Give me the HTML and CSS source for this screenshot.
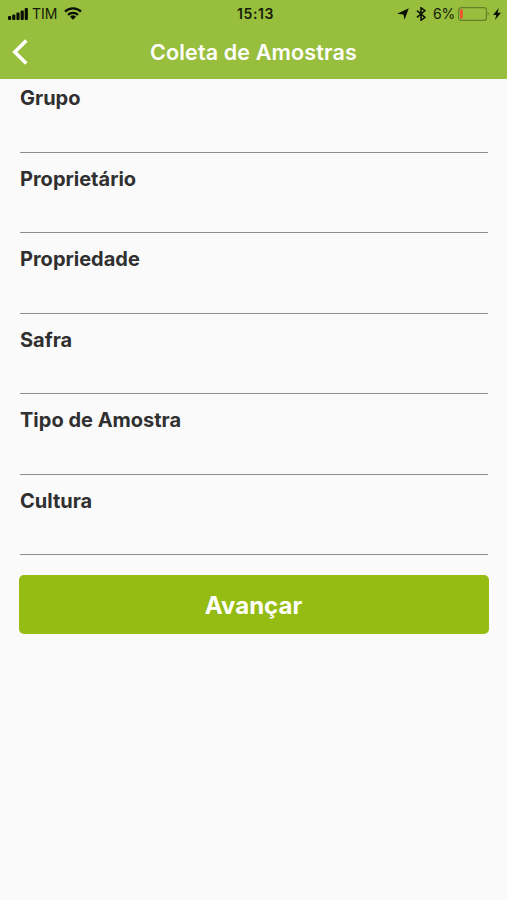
FILE: index.html
```html
<!DOCTYPE html>
<html lang="pt-BR">
<head>
<meta charset="utf-8">
<meta name="viewport" content="width=device-width">
<title>Coleta de Amostras</title>
<link rel="stylesheet" href="styles.css">
</head>
<body>
<header class="header">
  <div class="status">
    <div class="status-left">
      <svg class="signal" width="20" height="12" viewBox="0 0 20 12"><rect x="0" y="8" width="3.200" height="4" rx="1"/><rect x="4.200" y="6.500" width="3.200" height="5.500" rx="1"/><rect x="8.400" y="4.500" width="3.200" height="7.500" rx="1"/><rect x="12.600" y="2.500" width="3.200" height="9.500" rx="1"/><rect x="16.700" y="0" width="3.200" height="12" rx="1"/></svg>
      <span class="carrier">TIM</span>
      <svg class="wifi" width="18" height="13" viewBox="0 0 18 13"><g fill="none" stroke="#0b0f03" stroke-width="2.300"><path d="M1 4.600a11.500 11.500 0 0 1 16 0"/><path d="M4 7.800a7.200 7.200 0 0 1 10 0"/></g><path d="M9 12.800 6 9.800a4.300 4.300 0 0 1 6 0z"/></svg>
    </div>
    <span class="clock">15:13</span>
    <div class="status-right">
      <svg class="location" width="12" height="12" viewBox="0 0 12 12"><path d="M11.800.2 7.500 11.800 6.500 6.600.2 5.800z"/></svg>
      <svg class="bluetooth" width="10" height="14" viewBox="0 0 10 14"><path d="M1 3.700l8 6.600-4 3V.7l4 3-8 6.600" fill="none" stroke="#0b0f03" stroke-width="1.500"/></svg>
      <span class="percent">6%</span>
      <svg class="battery" width="32" height="14" viewBox="0 0 32 14"><rect x=".6" y=".6" width="27.800" height="12.800" rx="2.500" fill="none" stroke="#64802a" stroke-width="1.200"/><rect x="2" y="2.200" width="2.800" height="9.600" rx=".8" fill="#f05330"/><path d="M29.700 4.800q2.200 2.200 0 4.400z" fill="#64802a"/></svg>
      <svg class="bolt" width="8" height="12" viewBox="0 0 8 12"><path d="M5.800 0 0 7h3.300L2 12l6-7.200H4.600z"/></svg>
    </div>
  </div>
  <div class="nav">
    <svg class="back" width="17" height="28" viewBox="0 0 17 28"><path d="M14.300 2.500 2.800 14l11.500 11.500" fill="none" stroke="#fff" stroke-width="3.600"/></svg>
    <h1 class="title">Coleta de Amostras</h1>
  </div>
</header>
<main class="form">
  <label class="field">Grupo</label>
  <label class="field">Proprietário</label>
  <label class="field">Propriedade</label>
  <label class="field">Safra</label>
  <label class="field">Tipo de Amostra</label>
  <label class="field">Cultura</label>
  <button class="next">Avançar</button>
</main>
</body>
</html>
```
FILE: styles.css
```css
* { box-sizing: border-box; }
body { margin: 0; min-height: 900px; background: #fafafa; color: #303030; font-family: Inter, "Liberation Sans", sans-serif; }
svg { display: block; fill: #0b0f03; }
.header { height: 79px; background: #97be3d; }
.status { display: grid; grid-template-columns: 1fr auto 1fr; align-items: center; height: 27px; padding: 0 5px 0 8px; color: #161b09; font-size: 14px; }
.status-left, .status-right { display: flex; align-items: center; }
.status-right { justify-content: flex-end; }
.carrier { margin: 0 7px 0 4px; }
.clock { padding-left: 1px; font-weight: 600; letter-spacing: .6px; }
.percent { letter-spacing: -.2px; }
.bluetooth { margin: 0 7px 0 7px; }
.battery { margin: 0 3px 0 3px; }
.bolt { margin-right: 1px; }
.nav { display: grid; grid-template-columns: 30px 1fr 30px; align-items: center; height: 50px; padding: 0 12px; }
.title { margin: 0; color: #fff; font-size: 21.500px; font-weight: 600; letter-spacing: .15px; text-align: center; white-space: nowrap; }
.form { display: flex; flex-direction: column; padding: 0 18px 0 19px; }
.field { height: 80.600px; margin: 0 1px; padding-top: 13px; border-bottom: 1px solid #8c8c8c; font-size: 20px; line-height: 26px; font-weight: 650; }
.field:first-child { height: 73.500px; padding-top: 6px; }
.next { height: 59px; margin-top: 20px; padding: 1px 7px 0 6px; border: 0; border-radius: 5px; background: #95bc13; color: #fff; font: 650 24px Inter, "Liberation Sans", sans-serif; }
```
